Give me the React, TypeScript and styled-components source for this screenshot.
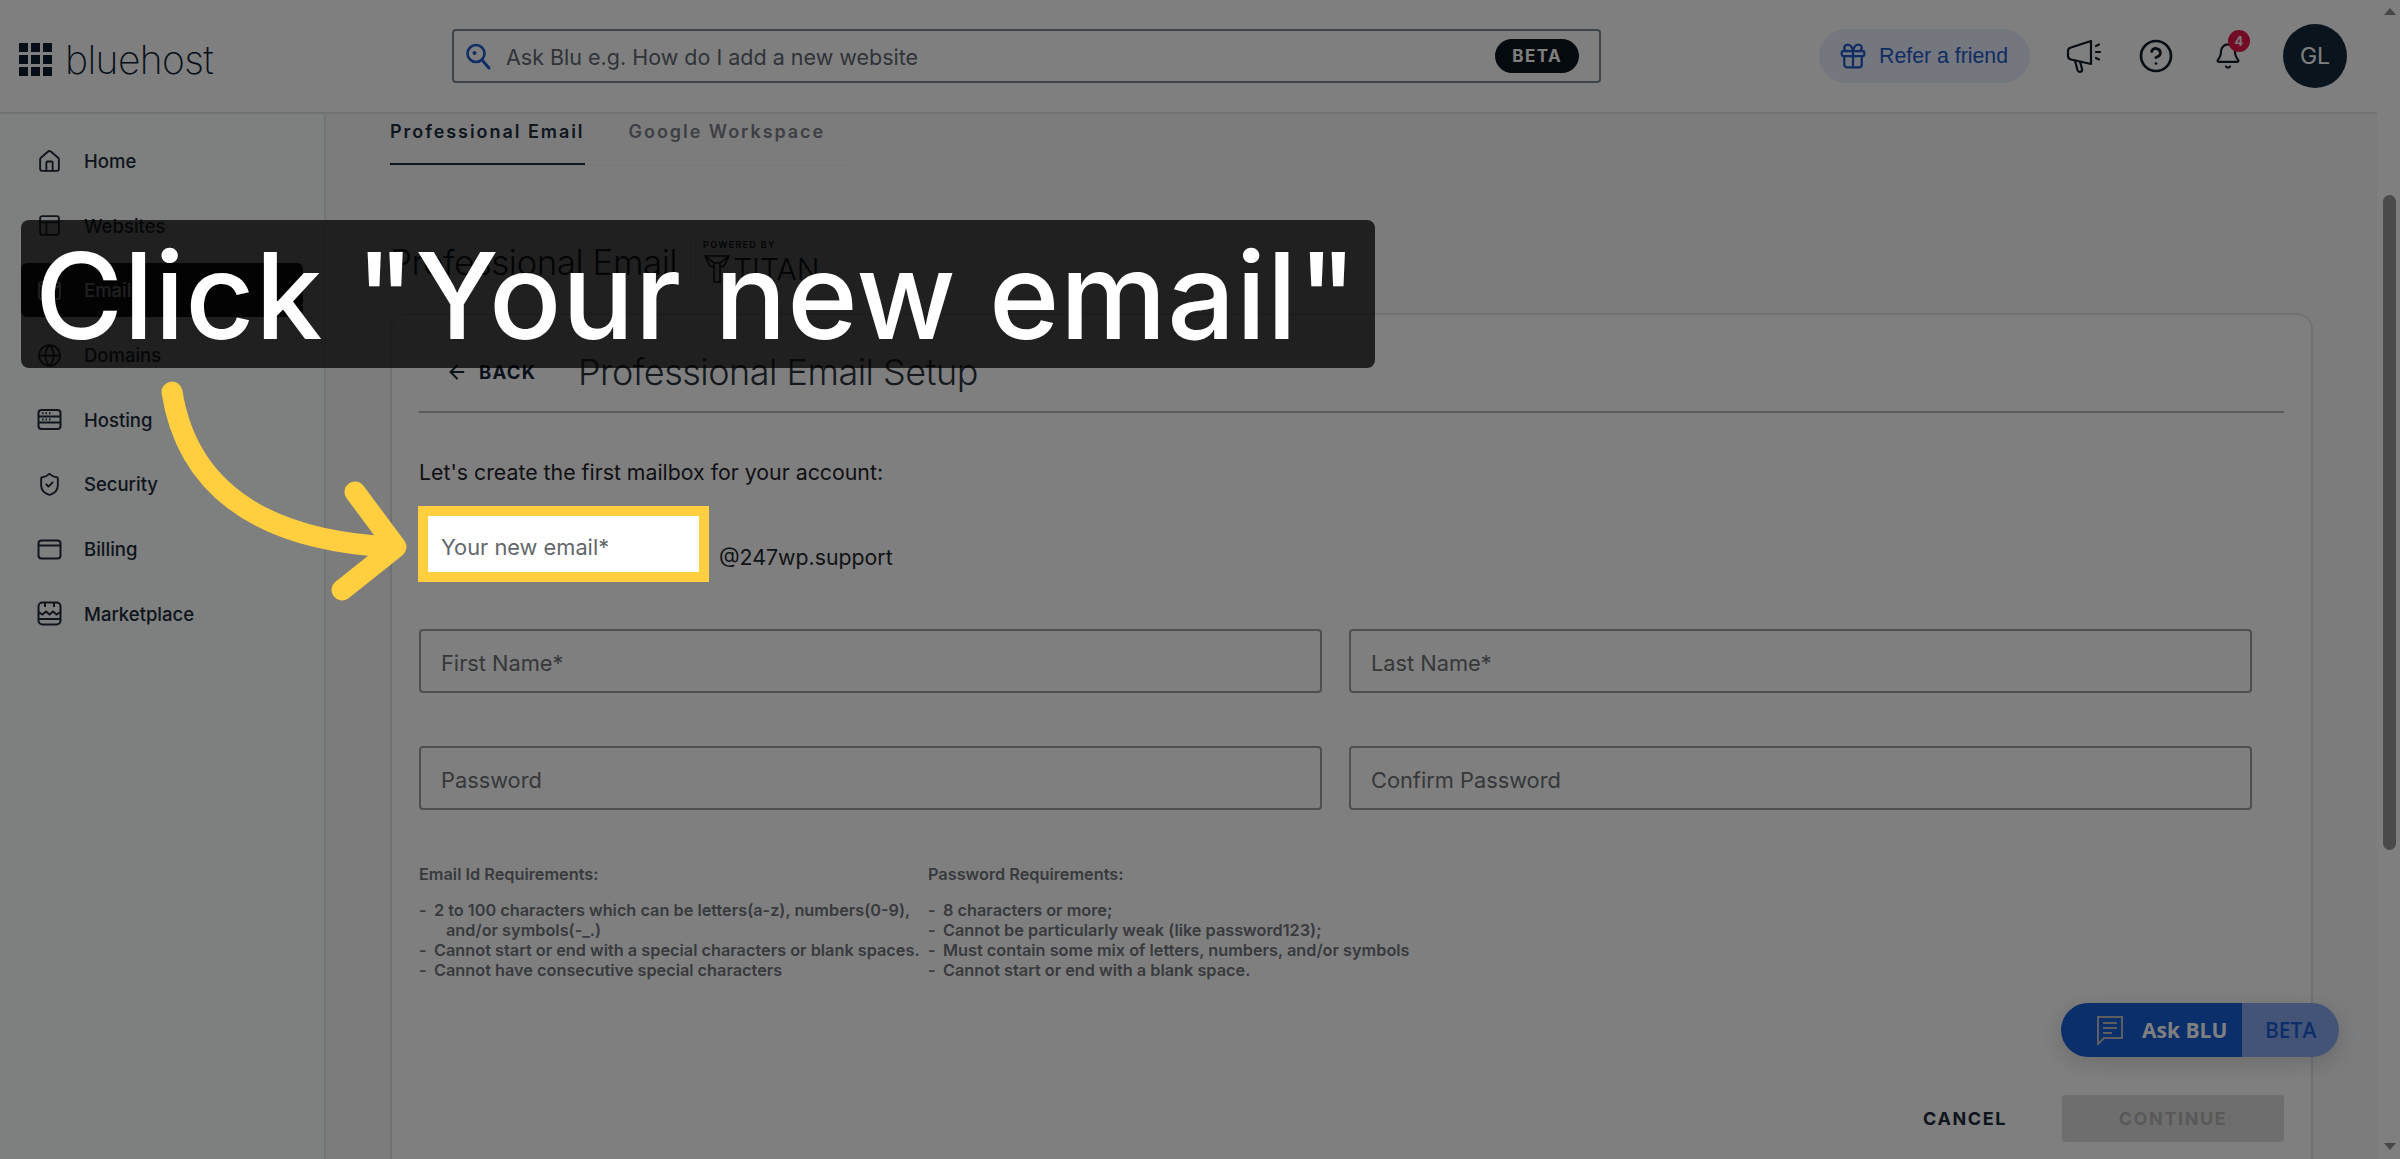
import styled, { createGlobalStyle } from "styled-components";
import {
  ArrowLeft,
  Bell,
  CircleHelp,
  Gift,
  Globe,
  Home,
  Mail,
  PanelsTopLeft,
  ShieldCheck,
} from "lucide-react";

const GlobalStyle = createGlobalStyle`
  html, body {
    margin: 0;
    padding: 0;
    background: #fff;
    overflow: hidden;
  }
  * {
    box-sizing: border-box;
  }
`;

const HostingIcon = () => (
  <svg width="25" height="25" viewBox="0 0 25 25" fill="none" stroke="currentColor" strokeWidth="2">
    <rect x="1.5" y="3" width="22" height="19" rx="3" />
    <path d="M1.5 9.5h22M1.5 15.5h22M5 6.2h1.5M8.5 6.2h1.5M12 6.2h1.5M5 12.5h1.5M8.5 12.5h1.5M12 12.5h1.5" />
  </svg>
);

const BillingIcon = () => (
  <svg width="25" height="25" viewBox="0 0 25 25" fill="none" stroke="currentColor" strokeWidth="2">
    <rect x="1.5" y="3.5" width="22" height="18" rx="3" />
    <path d="M1.5 8.5h22" />
  </svg>
);

const MarketIcon = () => (
  <svg width="25" height="25" viewBox="0 0 25 25" fill="none" stroke="currentColor" strokeWidth="2">
    <rect x="1.5" y="1.5" width="22" height="22" rx="4" />
    <path d="M1.5 11l4 2.5 3.5-3 3.5 3 3.5-3 3.5 3 4-2.5M1.5 18h22M8 2v4M17 2v4" />
  </svg>
);

const SearchIcon = () => (
  <svg width="26" height="28" viewBox="0 0 26 28" fill="none">
    <circle cx="11" cy="11.5" r="8.5" stroke="#1c5ccb" strokeWidth="2.6" />
    <path d="M17 18l7 8" stroke="#1c5ccb" strokeWidth="3" strokeLinecap="round" />
    <circle cx="9.5" cy="11" r="2" fill="#1c5ccb" />
  </svg>
);

const MegaphoneIcon = () => (
  <svg width="36" height="36" viewBox="0 0 36 36" fill="none" stroke="currentColor" strokeWidth="2.2" strokeLinecap="round" strokeLinejoin="round">
    <path d="M25 3v23L5 21.5Q2 20.8 2 18v-5q0-2.8 3-3.5z" />
    <path d="M9 22.5l2.5 9.500q.8 2.500 3 1.800t1.500-3l-2-7" />
    <path d="M30 8l3-1.500M30 14h4M30 20l3 1.500" />
  </svg>
);

const TitanMark = () => (
  <svg width="28" height="32" viewBox="0 0 28 32" fill="none" stroke="currentColor" strokeWidth="1.6">
    <path d="M2 3h24l-5 10-4 1v15h-6V14l-4-1zM2 3l9 7h6l9-7M11 10v4M17 10v4" />
  </svg>
);

const ChatIcon = () => (
  <svg width="28" height="30" viewBox="0 0 28 30" fill="none" stroke="#bdbdbd" strokeWidth="2">
    <path d="M2 2h24v21H8l-6 6z" />
    <path d="M7 8h14M7 13h14M7 18h9" />
  </svg>
);

const navItems = [
  { label: "Home", icon: <Home size={25} strokeWidth={1.8} /> },
  { label: "Websites", icon: <PanelsTopLeft size={25} strokeWidth={1.8} /> },
  { label: "Email", icon: <Mail size={25} strokeWidth={1.8} />, active: true },
  { label: "Domains", icon: <Globe size={25} strokeWidth={1.8} /> },
  { label: "Hosting", icon: <HostingIcon /> },
  { label: "Security", icon: <ShieldCheck size={25} strokeWidth={1.8} /> },
  { label: "Billing", icon: <BillingIcon /> },
  { label: "Marketplace", icon: <MarketIcon /> },
];

const emailRules = [
  "Cannot start or end with a special characters or blank spaces.",
  "Cannot have consecutive special characters",
];

const passwordRules = [
  "8 characters or more;",
  "Cannot be particularly weak (like password123);",
  "Must contain some mix of letters, numbers, and/or symbols",
  "Cannot start or end with a blank space.",
];

const App = () => {
  return (
    <Page>
      <GlobalStyle />
      <Shell>
        <TopBar>
          <Logo>
            <LogoGrid>
              {Array.from({ length: 9 }).map((_, i) => (
                <LogoDot key={i} />
              ))}
            </LogoGrid>
            <LogoText>bluehost</LogoText>
          </Logo>
          <SearchBox>
            <SearchIcon />
            <SearchText>Ask Blu e.g. How do I add a new website</SearchText>
            <BetaTag>BETA</BetaTag>
          </SearchBox>
          <TopActions>
            <ReferPill>
              <Gift size={30} strokeWidth={1.8} />
              Refer a friend
            </ReferPill>
            <TopIcon>
              <MegaphoneIcon />
            </TopIcon>
            <TopIcon>
              <CircleHelp size={36} strokeWidth={1.8} />
            </TopIcon>
            <TopIcon>
              <Bell size={28} strokeWidth={1.8} />
              <Badge>4</Badge>
            </TopIcon>
            <Avatar>GL</Avatar>
          </TopActions>
        </TopBar>
        <Body>
          <Sidebar>
            {navItems.map((item) => (
              <NavItem key={item.label} $active={item.active}>
                {item.icon}
                {item.label}
              </NavItem>
            ))}
          </Sidebar>
          <Content>
            <Tabs>
              <Tab $active>Professional Email</Tab>
              <Tab>Google Workspace</Tab>
            </Tabs>
            <HeadingRow>
              <Heading>Professional Email</Heading>
              <Powered>
                <PoweredBy>POWERED BY</PoweredBy>
                <TitanLogo>
                  <TitanMark />
                  TITAN
                </TitanLogo>
              </Powered>
            </HeadingRow>
            <Card>
              <CardHeader>
                <BackLink>
                  <ArrowLeft size={22} strokeWidth={2.2} />
                  BACK
                </BackLink>
                <CardTitle>Professional Email Setup</CardTitle>
              </CardHeader>
              <Intro>Let's create the first mailbox for your account:</Intro>
              <EmailRow>
                <HighlightField>Your new email*</HighlightField>
                <Domain>@247wp.support</Domain>
              </EmailRow>
              <FormGrid>
                <Field>First Name*</Field>
                <Field>Last Name*</Field>
                <Field>Password</Field>
                <Field>Confirm Password</Field>
              </FormGrid>
              <Requirements>
                <ReqColumn $width={509}>
                  <ReqTitle>Email Id Requirements:</ReqTitle>
                  <ReqItem>
                    <Dash>-</Dash>
                    <span>
                      2 to 100 characters which can be letters(a-z), numbers(0-9),
                      <ReqWrap>and/or symbols(-_.)</ReqWrap>
                    </span>
                  </ReqItem>
                  {emailRules.map((rule) => (
                    <ReqItem key={rule}>
                      <Dash>-</Dash>
                      <span>{rule}</span>
                    </ReqItem>
                  ))}
                </ReqColumn>
                <ReqColumn>
                  <ReqTitle>Password Requirements:</ReqTitle>
                  {passwordRules.map((rule) => (
                    <ReqItem key={rule}>
                      <Dash>-</Dash>
                      <span>{rule}</span>
                    </ReqItem>
                  ))}
                </ReqColumn>
              </Requirements>
              <CardFooter>
                <CancelButton>CANCEL</CancelButton>
                <ContinueButton>CONTINUE</ContinueButton>
              </CardFooter>
            </Card>
          </Content>
        </Body>
      </Shell>
      <ScrollTrack>
        <ArrowUp />
        <ScrollThumb />
        <ArrowDown />
      </ScrollTrack>
      <AskBlu>
        <AskMain>
          <ChatIcon />
          Ask BLU
        </AskMain>
        <AskBeta>BETA</AskBeta>
      </AskBlu>
      <Dimmer />
      <Banner>Click "Your new email"</Banner>
      <Pointer width="460" height="400" viewBox="0 0 460 400" fill="none">
        <path
          d="M172 392C186 480 250 540 392 547"
          stroke="#ffcf40"
          strokeWidth="21"
          strokeLinecap="round"
        />
        <path
          d="M355 492L396 547L342 590"
          stroke="#ffcf40"
          strokeWidth="21"
          strokeLinecap="round"
          strokeLinejoin="round"
        />
      </Pointer>
    </Page>
  );
};

export default App;

const Page = styled.div`
  position: relative;
  display: flex;
  width: 2400px;
  height: 1159px;
  overflow: hidden;
  background: #fff;
  color: #0a151c;
  font-family: "Inter", "Liberation Sans", sans-serif;
`;

const Shell = styled.div`
  display: flex;
  flex-direction: column;
  flex: 1;
  min-width: 0;
`;

const TopBar = styled.header`
  display: flex;
  align-items: center;
  flex: 0 0 114px;
  padding: 0 30px 0 19px;
  background: #fff;
  border-bottom: 2px solid #e2e4e9;
`;

const Logo = styled.div`
  display: flex;
  align-items: center;
  gap: 13px;
  width: 433px;
  margin-top: 6px;
`;

const LogoGrid = styled.div`
  display: grid;
  grid-template-columns: repeat(3, 9px);
  grid-auto-rows: 9px;
  gap: 3px;
`;

const LogoDot = styled.span`
  background: #0a1a2c;
`;

const LogoText = styled.span`
  font-family: "Inter", sans-serif;
  font-size: 39px;
  font-weight: 200;
  letter-spacing: -0.6px;
  color: #0f2033;
`;

const SearchBox = styled.div`
  display: flex;
  align-items: center;
  width: 1149px;
  height: 54px;
  padding: 0 20px 0 11px;
  border: 2px solid #7c8698;
  border-radius: 4px;
`;

const SearchText = styled.span`
  flex: 1;
  margin: 2px 0 0 15px;
  font-size: 21.5px;
  color: #606672;
`;

const BetaTag = styled.span`
  padding: 6px 17px;
  border-radius: 17px;
  background: #0a151c;
  color: #fff;
  font-size: 17px;
  font-weight: 700;
  letter-spacing: 1.4px;
  line-height: 22px;
`;

const TopActions = styled.div`
  display: flex;
  align-items: center;
  margin-left: auto;
`;

const ReferPill = styled.div`
  display: flex;
  align-items: center;
  gap: 11px;
  width: 211px;
  height: 54px;
  padding-left: 19px;
  margin-right: 36px;
  border-radius: 27px;
  background: #e8eefc;
  color: #1f5bc7;
  font-family: "Liberation Sans", sans-serif;
  font-size: 21.3px;
`;

const TopIcon = styled.div`
  position: relative;
  display: flex;
  align-items: center;
  justify-content: center;
  width: 36px;
  height: 36px;
  margin-right: 36px;
  color: #0f1a24;
`;

const Badge = styled.span`
  position: absolute;
  top: -8px;
  right: -4px;
  width: 22px;
  height: 22px;
  border-radius: 50%;
  background: #e8174b;
  color: #f0f0f0;
  font-size: 13px;
  font-weight: 700;
  line-height: 22px;
  text-align: center;
`;

const Avatar = styled.div`
  display: flex;
  align-items: center;
  justify-content: center;
  width: 64px;
  height: 64px;
  margin-left: 1px;
  border-radius: 50%;
  background: #13293a;
  color: #fff;
  font-size: 23px;
`;

const Body = styled.div`
  display: flex;
  flex: 1;
  min-height: 0;
`;

const Sidebar = styled.nav`
  display: flex;
  flex-direction: column;
  gap: 10.7px;
  flex: 0 0 326px;
  padding: 20px 0 0 21px;
  background: #fdfeff;
  border-right: 2px solid #e6e8ec;
`;

const NavItem = styled.div<{ $active?: boolean }>`
  display: flex;
  align-items: center;
  gap: 22px;
  width: 282px;
  height: 54px;
  padding-left: 16px;
  border-radius: 6px;
  background: ${(props) => (props.$active ? "#0a0c10" : "transparent")};
  color: ${(props) => (props.$active ? "#fff" : "#1c2a38")};
  font-size: 18.5px;
  font-weight: 500;
`;

const Content = styled.main`
  flex: 1;
  min-width: 0;
  padding: 0 65px 0 64px;
  background: #f8f9fb;
`;

const Tabs = styled.div`
  display: flex;
  gap: 44px;
  width: 458px;
  height: 52px;
  border-bottom: 1px solid #eceef1;
`;

const Tab = styled.div<{ $active?: boolean }>`
  height: 51px;
  padding-top: 4px;
  font-size: 18px;
  font-weight: 600;
  letter-spacing: 1.95px;
  line-height: 27px;
  white-space: nowrap;
  color: ${(props) => (props.$active ? "#1d2c3d" : "#7b7f86")};
  border-bottom: ${(props) => (props.$active ? "2px solid #1d2c3d" : "none")};
`;

const HeadingRow = styled.div`
  display: flex;
  align-items: center;
  height: 147px;
  padding-top: 44px;
`;

const Heading = styled.h1`
  margin: 0;
  padding-right: 18px;
  font-size: 35px;
  font-weight: 300;
  letter-spacing: -0.5px;
  white-space: nowrap;
  color: #0a151c;
`;

const Powered = styled.div`
  display: flex;
  flex-direction: column;
  gap: 3px;
  padding-left: 12px;
  margin-left: -5px;
  border-left: 1px solid #d8d8d8;
`;

const PoweredBy = styled.span`
  font-size: 9px;
  font-weight: 600;
  letter-spacing: 1.3px;
`;

const TitanLogo = styled.div`
  display: flex;
  align-items: center;
  gap: 2px;
  font-size: 30px;
  font-weight: 300;
  line-height: 32px;
`;

const Card = styled.section`
  height: 900px;
  padding: 0 27px;
  margin-right: -1px;
  background: #fff;
  border: 2px solid #e1e3e7;
  border-radius: 16px;
`;

const CardHeader = styled.div`
  display: flex;
  align-items: center;
  height: 98px;
  padding: 18px 0 0 27px;
  border-bottom: 2px solid #b4b6ba;
`;

const BackLink = styled.div`
  display: flex;
  align-items: center;
  gap: 11px;
  width: 133px;
  font-size: 18.5px;
  font-weight: 700;
  letter-spacing: 1.3px;
  color: #14263a;
`;

const CardTitle = styled.h2`
  margin: 0 0 0 -1px;
  font-size: 36px;
  font-weight: 300;
  letter-spacing: -0.5px;
  color: #2c333c;
`;

const Intro = styled.p`
  margin: 45px 0 0;
  font-size: 21.3px;
  line-height: 28px;
  color: #1f2328;
`;

const EmailRow = styled.div`
  display: flex;
  margin: 20px 0 0 -1px;
`;

const HighlightField = styled.div`
  position: relative;
  z-index: 20;
  display: flex;
  align-items: center;
  width: 291px;
  height: 76px;
  padding: 5px 0 0 13px;
  background: #fff;
  border: 10px solid #ffcf40;
  font-size: 21.8px;
  color: #63676b;
`;

const Domain = styled.span`
  align-self: center;
  margin: 26px 0 0 10px;
  font-size: 21.3px;
  color: #23272c;
`;

const FormGrid = styled.div`
  display: grid;
  grid-template-columns: 903px 903px;
  grid-auto-rows: 64px;
  gap: 53px 27px;
  margin-top: 47px;
`;

const Field = styled.div`
  display: flex;
  align-items: center;
  padding: 4px 0 0 20px;
  border: 2px solid #9a9ea4;
  border-radius: 4px;
  font-size: 21.8px;
  color: #6c7075;
`;

const Requirements = styled.div`
  display: flex;
  margin-top: 54px;
  font-size: 16.3px;
  font-weight: 600;
  line-height: 20px;
  color: #70747a;
`;

const ReqColumn = styled.div<{ $width?: number }>`
  flex: 0 0 ${(props) => (props.$width ? `${props.$width}px` : "auto")};
`;

const ReqTitle = styled.div`
  margin-bottom: 16px;
`;

const ReqItem = styled.div`
  display: flex;
  white-space: nowrap;
`;

const Dash = styled.span`
  flex: 0 0 15px;
`;

const ReqWrap = styled.span`
  display: block;
  padding-left: 12px;
`;

const CardFooter = styled.div`
  display: flex;
  align-items: center;
  justify-content: flex-end;
  gap: 55px;
  margin-top: 115px;
`;

const CancelButton = styled.div`
  font-size: 18px;
  font-weight: 700;
  letter-spacing: 1.6px;
  color: #1e2a3a;
`;

const ContinueButton = styled.div`
  display: flex;
  align-items: center;
  justify-content: center;
  width: 222px;
  height: 47px;
  border-radius: 4px;
  background: #dcdcdc;
  font-size: 18px;
  font-weight: 700;
  letter-spacing: 1.6px;
  color: #b2b2b2;
`;

const ScrollTrack = styled.div`
  display: flex;
  flex-direction: column;
  align-items: flex-end;
  flex: 0 0 23px;
  padding: 8px 4px 9px 6px;
  background: #fff;
`;

const ArrowUp = styled.span`
  align-self: center;
  border: 6.5px solid transparent;
  border-top: 0;
  border-bottom: 7px solid #8e8e8e;
`;

const ArrowDown = styled.span`
  align-self: center;
  margin-top: auto;
  border: 6.5px solid transparent;
  border-bottom: 0;
  border-top: 7px solid #8e8e8e;
`;

const ScrollThumb = styled.span`
  width: 13px;
  height: 655px;
  margin-top: 180px;
  border-radius: 7px;
  background: #949494;
`;

const AskBlu = styled.div`
  position: absolute;
  top: 1003px;
  left: 2061px;
  display: flex;
  width: 278px;
  height: 54px;
  border-radius: 27px;
  overflow: hidden;
  box-shadow: 0 6px 24px rgba(0, 0, 0, 0.16);
  font-family: "Open Sans", sans-serif;
  font-size: 21px;
  font-weight: 700;
`;

const AskMain = styled.div`
  display: flex;
  align-items: center;
  gap: 18px;
  flex: 0 0 181px;
  padding-left: 35px;
  background: #155ed4;
  color: #fff;
`;

const AskBeta = styled.div`
  display: flex;
  align-items: center;
  flex: 1;
  padding-left: 23px;
  font-weight: 600;
  background: #87a8ee;
  color: #1a5dd3;
`;

const Dimmer = styled.div`
  position: absolute;
  inset: 0;
  z-index: 10;
  background: rgba(0, 0, 0, 0.5);
`;

const Banner = styled.div`
  position: absolute;
  top: 220px;
  left: 21px;
  z-index: 30;
  width: 1354px;
  height: 148px;
  padding: 2px 0 0 14px;
  border-radius: 8px;
  background: rgba(3, 3, 3, 0.76);
  color: #fff;
  font-family: "Inter", sans-serif;
  font-size: 120px;
  font-weight: 500;
  letter-spacing: 0.6px;
  line-height: 148px;
  white-space: nowrap;
`;

const Pointer = styled.svg`
  position: absolute;
  top: 0;
  left: 0;
  z-index: 30;
  overflow: visible;
`;
